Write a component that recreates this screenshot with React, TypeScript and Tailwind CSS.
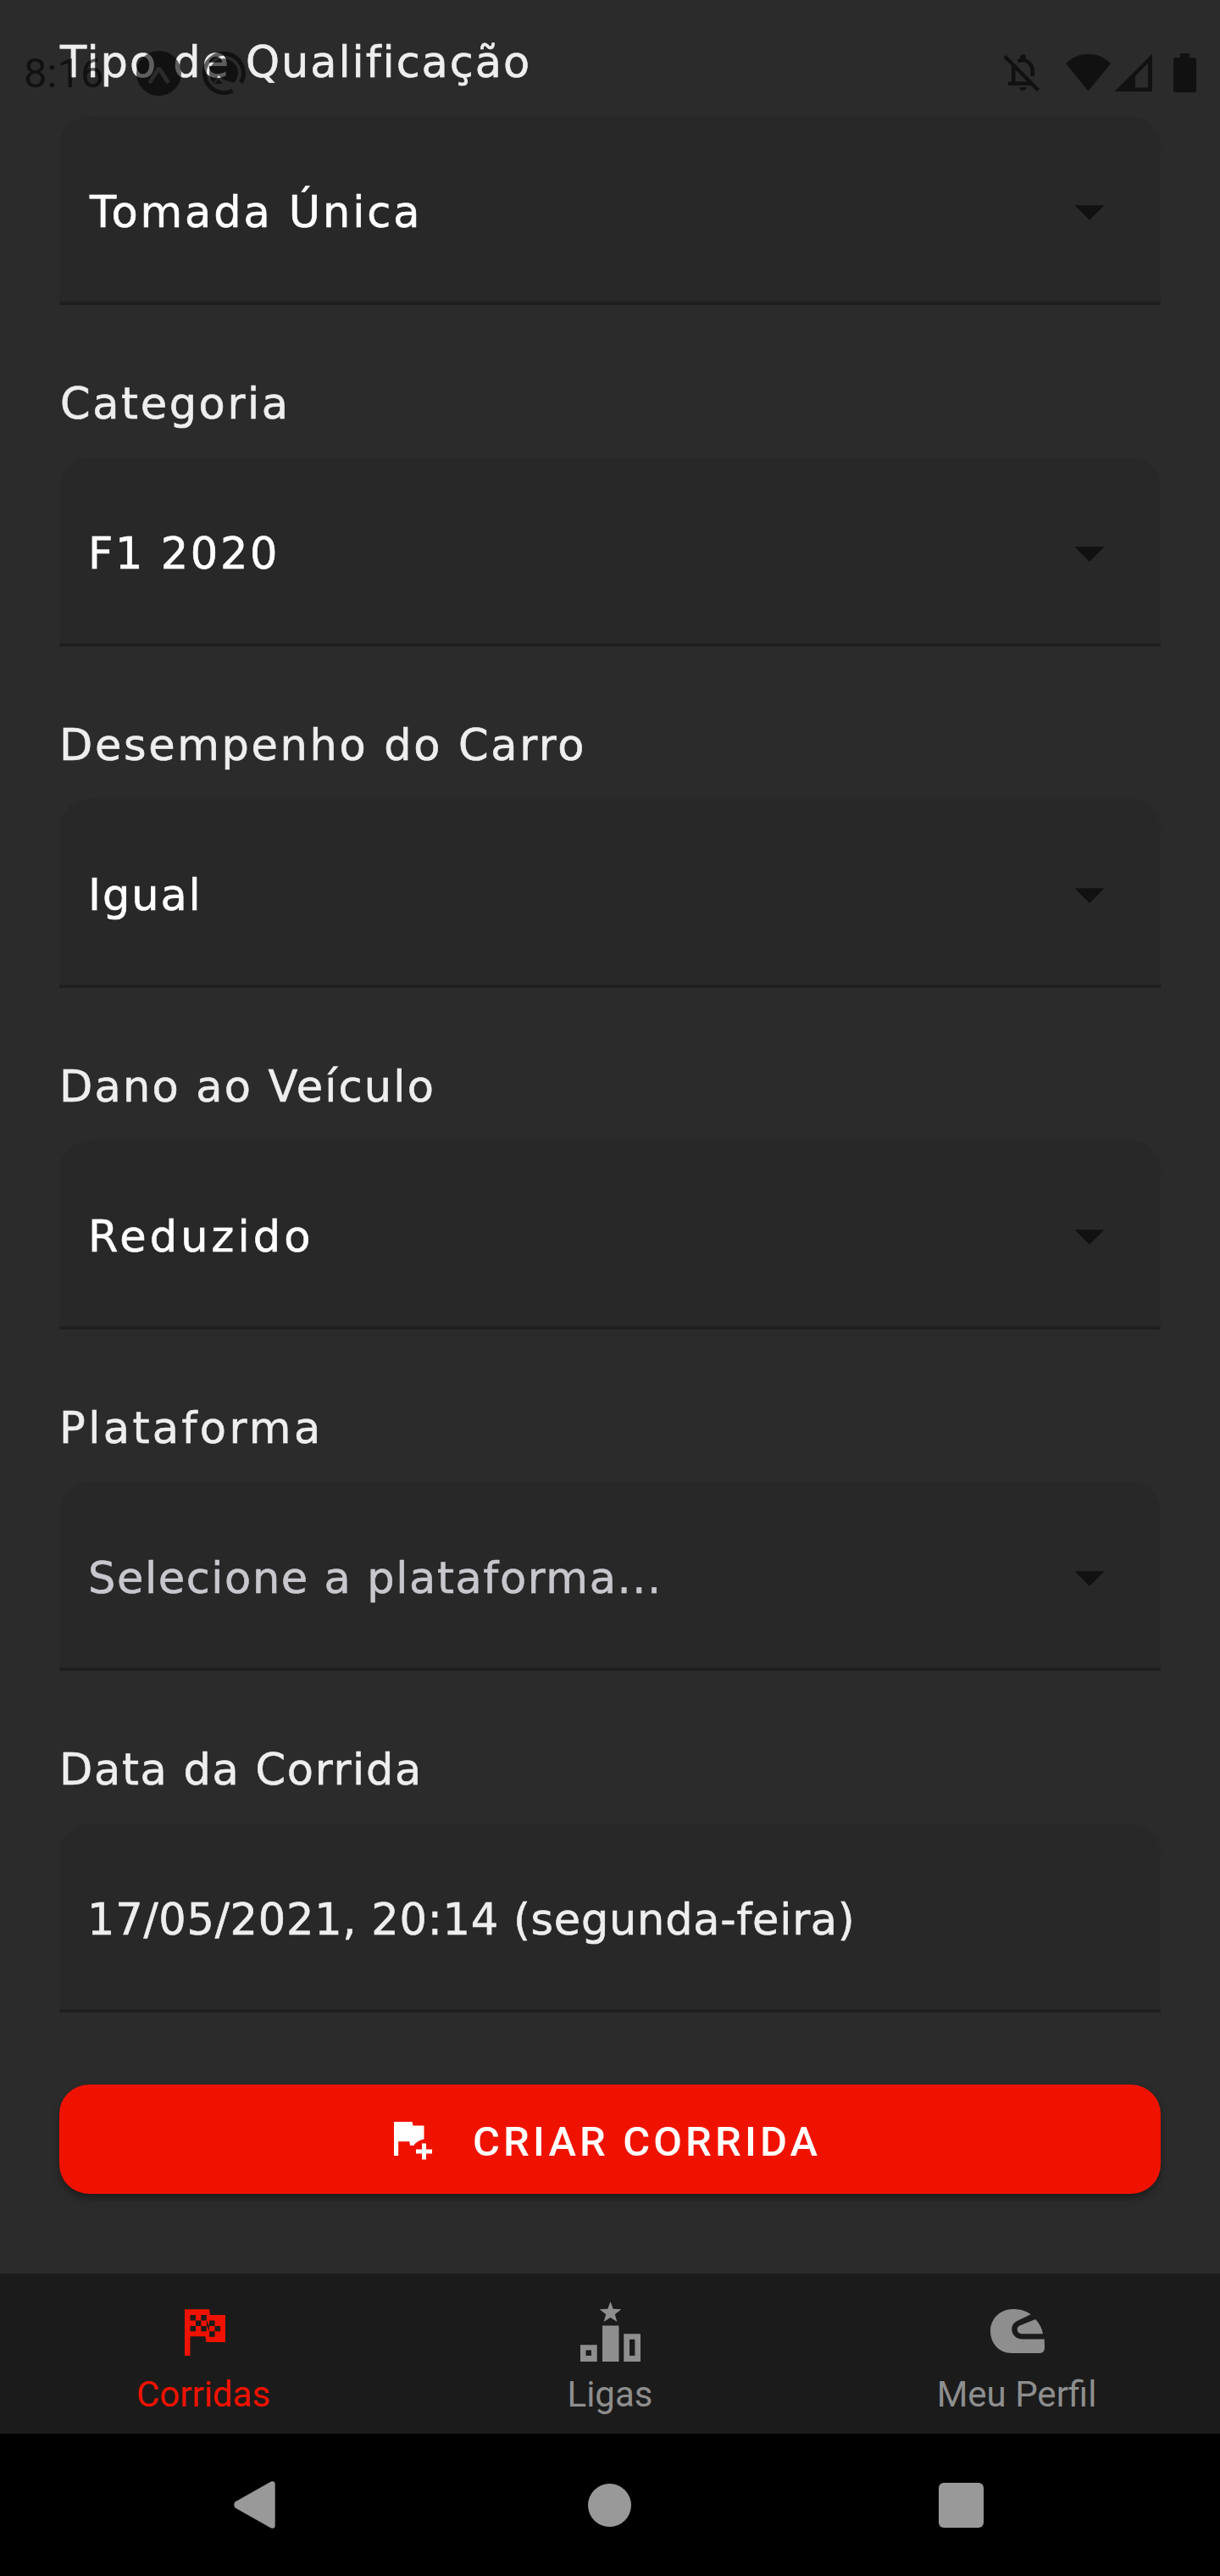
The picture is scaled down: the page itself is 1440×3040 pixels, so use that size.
type Field = {
  label: string;
  labelClass: string;
  value: string;
  valueClass: string;
  select: boolean;
};

const fields: Field[] = [
  {
    label: "Tipo de Qualificação",
    labelClass: "pl-px tracking-[1.93px]",
    value: "Tomada Única",
    valueClass: "pl-[36px] tracking-[2.9px] text-white",
    select: true,
  },
  {
    label: "Categoria",
    labelClass: "pl-px tracking-[2.6px]",
    value: "F1 2020",
    valueClass: "pl-[34px] tracking-[2.6px] text-white",
    select: true,
  },
  {
    label: "Desempenho do Carro",
    labelClass: "tracking-[2.65px]",
    value: "Igual",
    valueClass: "pl-[34px] tracking-[1.9px] text-white",
    select: true,
  },
  {
    label: "Dano ao Veículo",
    labelClass: "tracking-[2.2px]",
    value: "Reduzido",
    valueClass: "pl-[34px] tracking-[4.1px] text-white",
    select: true,
  },
  {
    label: "Plataforma",
    labelClass: "tracking-[3.4px]",
    value: "Selecione a plataforma...",
    valueClass: "pl-[34px] tracking-[1.6px] text-[#c7c7cd]",
    select: true,
  },
  {
    label: "Data da Corrida",
    labelClass: "tracking-[1.7px]",
    value: "17/05/2021, 20:14 (segunda-feira)",
    valueClass: "pl-[33px] tracking-[0.74px] text-[#eeeeee]",
    select: false,
  },
];

function FormField({ field }: { field: Field }) {
  return (
    <div className="font-['DejaVu_Sans',sans-serif] text-[51px] leading-[60px] whitespace-nowrap [-webkit-text-stroke:0.6px_currentColor]">
      <div className={`text-[#eeeeee] ${field.labelClass}`}>{field.label}</div>
      <div className="mt-[33px] flex h-[223px] items-center justify-between rounded-t-[36px] border-b-4 border-[#1f1f1f] bg-[#282828] pt-[8px] pr-[66px]">
        <span className={field.valueClass}>{field.value}</span>
        {field.select && (
          <svg className="h-[18px] w-[36px]" viewBox="0 0 36 18" fill="#111111">
            <path d="M0.5 0.3H35.5L18 17.8Z" />
          </svg>
        )}
      </div>
    </div>
  );
}

function StatusBar() {
  return (
    <div className="absolute inset-x-0 top-0 flex h-[172px] items-center justify-between pr-[27px] opacity-60">
      <div className="flex items-center pl-[28px]">
        <span className="mt-[2px] w-[133px] font-[Roboto,sans-serif] text-[49px] leading-[58px] text-black">8:16</span>
        <svg className="h-[56px] w-[132px]" viewBox="161 58 132 56">
          <path
            fillRule="evenodd"
            d="M187.500 60A26.500 26.500 0 1 1 187.500 113A26.500 26.500 0 1 1 187.500 60ZM187.500 79C185.500 79 184.800 80 183.800 82L175 96C174.300 97.500 177 99.500 179 98L187.500 85L196 98C198 99.500 201 97.500 200.500 96L191.500 82C190.500 80 189.500 79 187.500 79Z"
          />
          <path
            d="M284.500 97.500A23 23 0 1 0 274.500 107"
            fill="none"
            stroke="#000"
            strokeWidth="5"
          />
          <path d="M264 69A17 17 0 0 0 252 98L258 89L264 94L276 98A17 17 0 0 0 264 69Z" />
          <path d="M253 99L258 93L263 99Z" />
        </svg>
      </div>
      <svg className="h-[56px] w-[232px]" viewBox="1181 58 232 56">
        <g fill="none" stroke="#000" strokeWidth="4.500">
          <path d="M1186 66.500L1225.500 106.500" />
          <path d="M1201.500 72.500C1209 68.500 1218.700 74 1218.700 83V90" />
          <path d="M1196.200 77V98" />
          <path d="M1190 98.500H1219" />
        </g>
        <path d="M1204 71V67.500A3.500 3.500 0 0 1 1211 67.500V71ZM1203 103H1211.700A4.400 4.400 0 0 1 1203 103Z" />
        <path d="M1258 75C1272 60 1297 60 1311 75L1284.500 107.500Z" />
        <path
          fillRule="evenodd"
          d="M1315.500 108L1360 63.500V108ZM1340 90V103.500H1355V74.500Z"
        />
        <path d="M1393 68V63H1404V68H1409.500Q1412 68 1412 70.500V106.500Q1412 109 1409.500 109H1387.500Q1385 109 1385 106.500V70.500Q1385 68 1387.500 68Z" />
      </svg>
    </div>
  );
}

function CorridasIcon() {
  return (
    <svg className="h-[76px] w-[76px]" viewBox="202 2714 76 76">
      <path
        fill="#f01200"
        fillRule="evenodd"
        d="M218 2725.300H247L248 2732H266V2764H243.500L242.300 2757.300H224.500V2780H218ZM224.500 2732V2738.500H231V2732ZM237.300 2732V2738.500H243.800V2732ZM231 2738.500V2745H237.300V2738.500ZM224.500 2745V2751.300H231V2745ZM237.300 2745V2751.300H243.800V2745ZM247 2738.500V2745H253.500V2738.500ZM253.500 2745V2751.300H260V2745ZM247 2751.300V2757.700H253.500V2751.300ZM244 2738.500V2744.500L247 2751.300V2745Z"
      />
    </svg>
  );
}

function LigasIcon() {
  return (
    <svg className="h-[76px] w-[76px]" viewBox="682 2714 76 76">
      <g fill="#8e8e8e" fillRule="evenodd">
        <path d="M720.500 2716L723.700 2724.700L733.300 2725.200L725.800 2731.200L728.300 2740L720.500 2735L712.700 2740L715.200 2731.200L707.700 2725.200L717.300 2724.700Z" />
        <path d="M685 2767.200H704.700V2787H685ZM691.500 2773.500V2780H698V2773.500Z" />
        <path d="M711 2744.500H730.500V2787H711Z" />
        <path d="M736.300 2754.200H756V2787H736.300ZM743 2760.700V2780H749.400V2760.700Z" />
      </g>
    </svg>
  );
}

function PerfilIcon() {
  return (
    <svg className="h-[76px] w-[76px]" viewBox="1162 2714 76 76">
      <g fill="#8e8e8e">
        <path d="M1216.700 2731.300C1211 2727 1204 2725 1196 2725C1180 2725 1169 2737 1169 2751C1169 2765 1179 2777 1194 2777H1227.500Q1233 2776.500 1233 2770.500L1232.700 2760.500H1207C1199 2760.500 1194.300 2755 1194.300 2749C1194.300 2744 1197 2740.500 1201 2738.700Z" />
        <path d="M1222.300 2737C1227 2742 1230 2748 1231 2754.200H1206.500C1202.500 2754.200 1200.700 2751.500 1200.700 2749C1200.700 2746.500 1202 2745 1204.200 2744.300Z" />
      </g>
    </svg>
  );
}

export default function App() {
  return (
    <div className="relative flex h-[3040px] w-[1440px] flex-col overflow-hidden bg-[#2b2b2b]">
      <main className="flex h-[2683px] flex-col px-[70px] pt-[44px]">
        <div className="flex flex-col gap-[87px]">
          {fields.map((field) => (
            <FormField key={field.label} field={field} />
          ))}
        </div>
        <button className="mt-[85px] flex h-[129px] shrink-0 items-center rounded-[35px] bg-[#f01200] pl-[394px] shadow-[0_5px_8px_rgba(0,0,0,0.35)]">
          <svg className="mt-[3px] h-[46px] w-[46px]" viewBox="463.500 2503 46 46" fill="#fff">
            <path d="M464.500 2504H486L487 2508.500H500V2524.500C495 2525.500 490 2528 488 2532H483.500L482.800 2527.300H469.700V2544H464.500Z" />
            <path d="M497.500 2529.500H502.500V2536.500H509.500V2541.500H502.500V2548.500H497.500V2541.500H490.500V2536.500H497.500Z" />
          </svg>
          <span className="ml-[48px] pt-[6px] font-[Roboto,sans-serif] text-[49px] leading-[58px] font-medium tracking-[4.09px] text-white">
            CRIAR CORRIDA
          </span>
        </button>
      </main>

      <nav className="grid h-[189px] grid-cols-3 bg-[#1b1b1b] pt-[31px] font-[Roboto,sans-serif] text-[42px] leading-[50px] text-[#8e8e8e]">
        <div className="flex flex-col items-center gap-[11px] text-[#f01200]">
          <CorridasIcon />
          <span>Corridas</span>
        </div>
        <div className="flex flex-col items-center gap-[11px]">
          <LigasIcon />
          <span>Ligas</span>
        </div>
        <div className="flex flex-col items-center gap-[11px]">
          <PerfilIcon />
          <span>Meu Perfil</span>
        </div>
      </nav>

      <div className="flex h-[168px] items-center justify-between bg-black pr-[279px] pl-[275px]">
        <svg className="h-[60px] w-[52px]" viewBox="275 2926 52 60" fill="#999999">
          <path d="M277.500 2952.500L320 2928.500Q324.700 2927 324.700 2932V2980Q324.700 2985 320 2983.500L277.500 2959.500Q275 2956 277.500 2952.500Z" />
        </svg>
        <div className="ml-[3px] size-[51px] rounded-full bg-[#999999]" />
        <div className="size-[53px] rounded-[6px] bg-[#999999]" />
      </div>

      <StatusBar />
    </div>
  );
}
